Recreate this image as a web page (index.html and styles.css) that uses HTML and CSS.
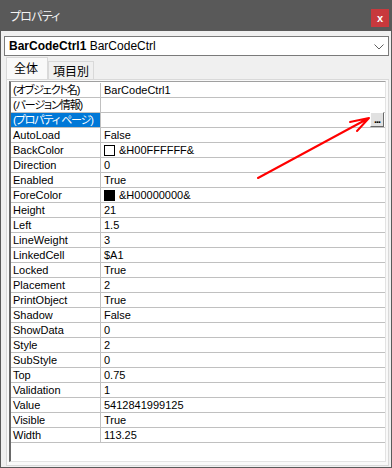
FILE: index.html
```html
<!doctype html>
<html lang="ja">
  <head>
    <meta charset="utf-8">
    <title>プロパティ</title>
    <link rel="stylesheet" href="styles.css">
  </head>
  <body>
    <div class="window">
      <div class="titlebar">
        <span class="title">プロパティ</span>
        <span class="close">x</span>
      </div>

      <div class="content">
        <div class="combo">
          <span class="combo-text"><b>BarCodeCtrl1</b> BarCodeCtrl</span>
          <svg class="chevron" width="10" height="6" viewBox="0 0 10 6">
            <path d="M0.5 0.5 L5 5 L9.5 0.5" fill="none" stroke="#606060" stroke-width="1"/>
          </svg>
        </div>

        <div class="tabs">
          <span class="tab active">全体</span>
          <span class="tab">項目別</span>
        </div>

        <div class="panel">
          <div class="list">
            <div class="row"><div class="name jp">(オブジェクト名)</div><div class="value">BarCodeCtrl1</div></div>
            <div class="row"><div class="name jp">(バージョン情報)</div><div class="value"></div></div>
            <div class="row"><div class="name jp selected">(プロパティ ページ)</div><div class="value"><span class="dots">...</span></div></div>
            <div class="row"><div class="name">AutoLoad</div><div class="value">False</div></div>
            <div class="row"><div class="name">BackColor</div><div class="value"><span class="swatch"></span>&amp;H00FFFFFF&amp;</div></div>
            <div class="row"><div class="name">Direction</div><div class="value">0</div></div>
            <div class="row"><div class="name">Enabled</div><div class="value">True</div></div>
            <div class="row"><div class="name">ForeColor</div><div class="value"><span class="swatch black"></span>&amp;H00000000&amp;</div></div>
            <div class="row"><div class="name">Height</div><div class="value">21</div></div>
            <div class="row"><div class="name">Left</div><div class="value">1.5</div></div>
            <div class="row"><div class="name">LineWeight</div><div class="value">3</div></div>
            <div class="row"><div class="name">LinkedCell</div><div class="value">$A1</div></div>
            <div class="row"><div class="name">Locked</div><div class="value">True</div></div>
            <div class="row"><div class="name">Placement</div><div class="value">2</div></div>
            <div class="row"><div class="name">PrintObject</div><div class="value">True</div></div>
            <div class="row"><div class="name">Shadow</div><div class="value">False</div></div>
            <div class="row"><div class="name">ShowData</div><div class="value">0</div></div>
            <div class="row"><div class="name">Style</div><div class="value">2</div></div>
            <div class="row"><div class="name">SubStyle</div><div class="value">0</div></div>
            <div class="row"><div class="name">Top</div><div class="value">0.75</div></div>
            <div class="row"><div class="name">Validation</div><div class="value">1</div></div>
            <div class="row"><div class="name">Value</div><div class="value">5412841999125</div></div>
            <div class="row"><div class="name">Visible</div><div class="value">True</div></div>
            <div class="row"><div class="name">Width</div><div class="value">113.25</div></div>
          </div>
        </div>
      </div>

      <svg class="arrow" width="392" height="468" viewBox="0 0 392 468">
        <path d="M258 178 L369 118 M369 118 L350 122 M369 118 L357 131" fill="none" stroke="#ff0000" stroke-width="2" stroke-linecap="round"/>
      </svg>
    </div>
  </body>
</html>
```

FILE: styles.css
```css
* {
  box-sizing: border-box;
}

body {
  margin: 0;
  font-family: "Liberation Sans", "Noto Sans CJK JP", sans-serif;
  background: #f0f0f0;
}

.window {
  position: relative;
  width: 392px;
  height: 468px;
  background: #f0f0f0;
  border: 1px solid #5a5a5a;
  border-top: none;
  display: flex;
  flex-direction: column;
}

.titlebar {
  height: 31px;
  margin: 0 -1px;
  background: #595959;
  display: flex;
  align-items: center;
  justify-content: space-between;
  padding: 0 3px 0 10px;
}

.title {
  color: #f4f4f4;
  font-family: "Noto Sans CJK JP", sans-serif;
  font-size: 12px;
  font-feature-settings: "palt";
  letter-spacing: -0.8px;
}

.close {
  width: 18px;
  height: 18px;
  background: #c8393d;
  color: #fff;
  font-weight: bold;
  font-size: 11px;
  display: flex;
  align-items: center;
  justify-content: center;
  margin-top: 5px;
}

.content {
  flex: 1;
  display: flex;
  flex-direction: column;
  padding: 5px 2px 1px 3px;
}

.combo {
  height: 20px;
  background: #fff;
  border: 1px solid #7a7a7a;
  display: flex;
  align-items: center;
  justify-content: space-between;
  padding: 0 4px 0 4px;
  font-size: 12px;
}

.combo-text {
  color: #000;
}

.chevron {
  margin-top: 1px;
}

.tabs {
  display: flex;
  align-items: flex-end;
  height: 22px;
  margin-top: 1px;
  padding-left: 2px;
  font-family: "Noto Sans CJK JP", sans-serif;
  font-size: 12px;
}

.tab {
  height: 18px;
  padding: 0 4px;
  border: 1px solid #d9d9d9;
  border-bottom: none;
  line-height: 17px;
  background: #f0f0f0;
}

.tab.active {
  height: 22px;
  padding: 0 9px 0 7px;
  line-height: 20px;
  background: #f9f9f9;
}

.panel {
  flex: 1;
  margin: 0 0 0 2px;
  border: 1px solid #d9d9d9;
  padding: 1px 2px 3px 2px;
  background: #f9f9f9;
}

.list {
  height: 100%;
  background: #fff;
  border-top: 1px solid #a0a0a0;
  border-left: 2px solid #696969;
  border-right: 1px solid #e3e3e3;
  border-bottom: 1px solid #e3e3e3;
  padding-top: 1px;
  font-size: 11px;
  font-feature-settings: "palt";
}

.row {
  display: flex;
  height: 15px;
  border-bottom: 1px solid #c0c0c0;
}

.name {
  width: 90px;
  border-right: 1px solid #c0c0c0;
  padding-left: 2px;
  line-height: 14px;
  white-space: nowrap;
  overflow: hidden;
}

.name.jp {
  letter-spacing: -1.1px;
}

.name.selected {
  background: #0078d7;
  color: #fff;
}

.value {
  flex: 1;
  padding-left: 3px;
  line-height: 14px;
  display: flex;
  align-items: center;
  position: relative;
}

.swatch {
  width: 11px;
  height: 11px;
  border: 1px solid #000;
  background: #fff;
  margin-right: 4px;
}

.swatch.black {
  background: #000;
}

.dots {
  position: absolute;
  right: 1px;
  top: -1px;
  width: 14px;
  height: 15px;
  background: #e1e1e1;
  border-top: 1px solid #fff;
  border-left: 1px solid #fff;
  border-right: 1px solid #696969;
  border-bottom: 1px solid #696969;
  font-weight: bold;
  font-size: 11px;
  line-height: 12px;
  text-align: center;
  letter-spacing: -1px;
}

.arrow {
  position: absolute;
  left: -1px;
  top: 0;
  pointer-events: none;
}
```
